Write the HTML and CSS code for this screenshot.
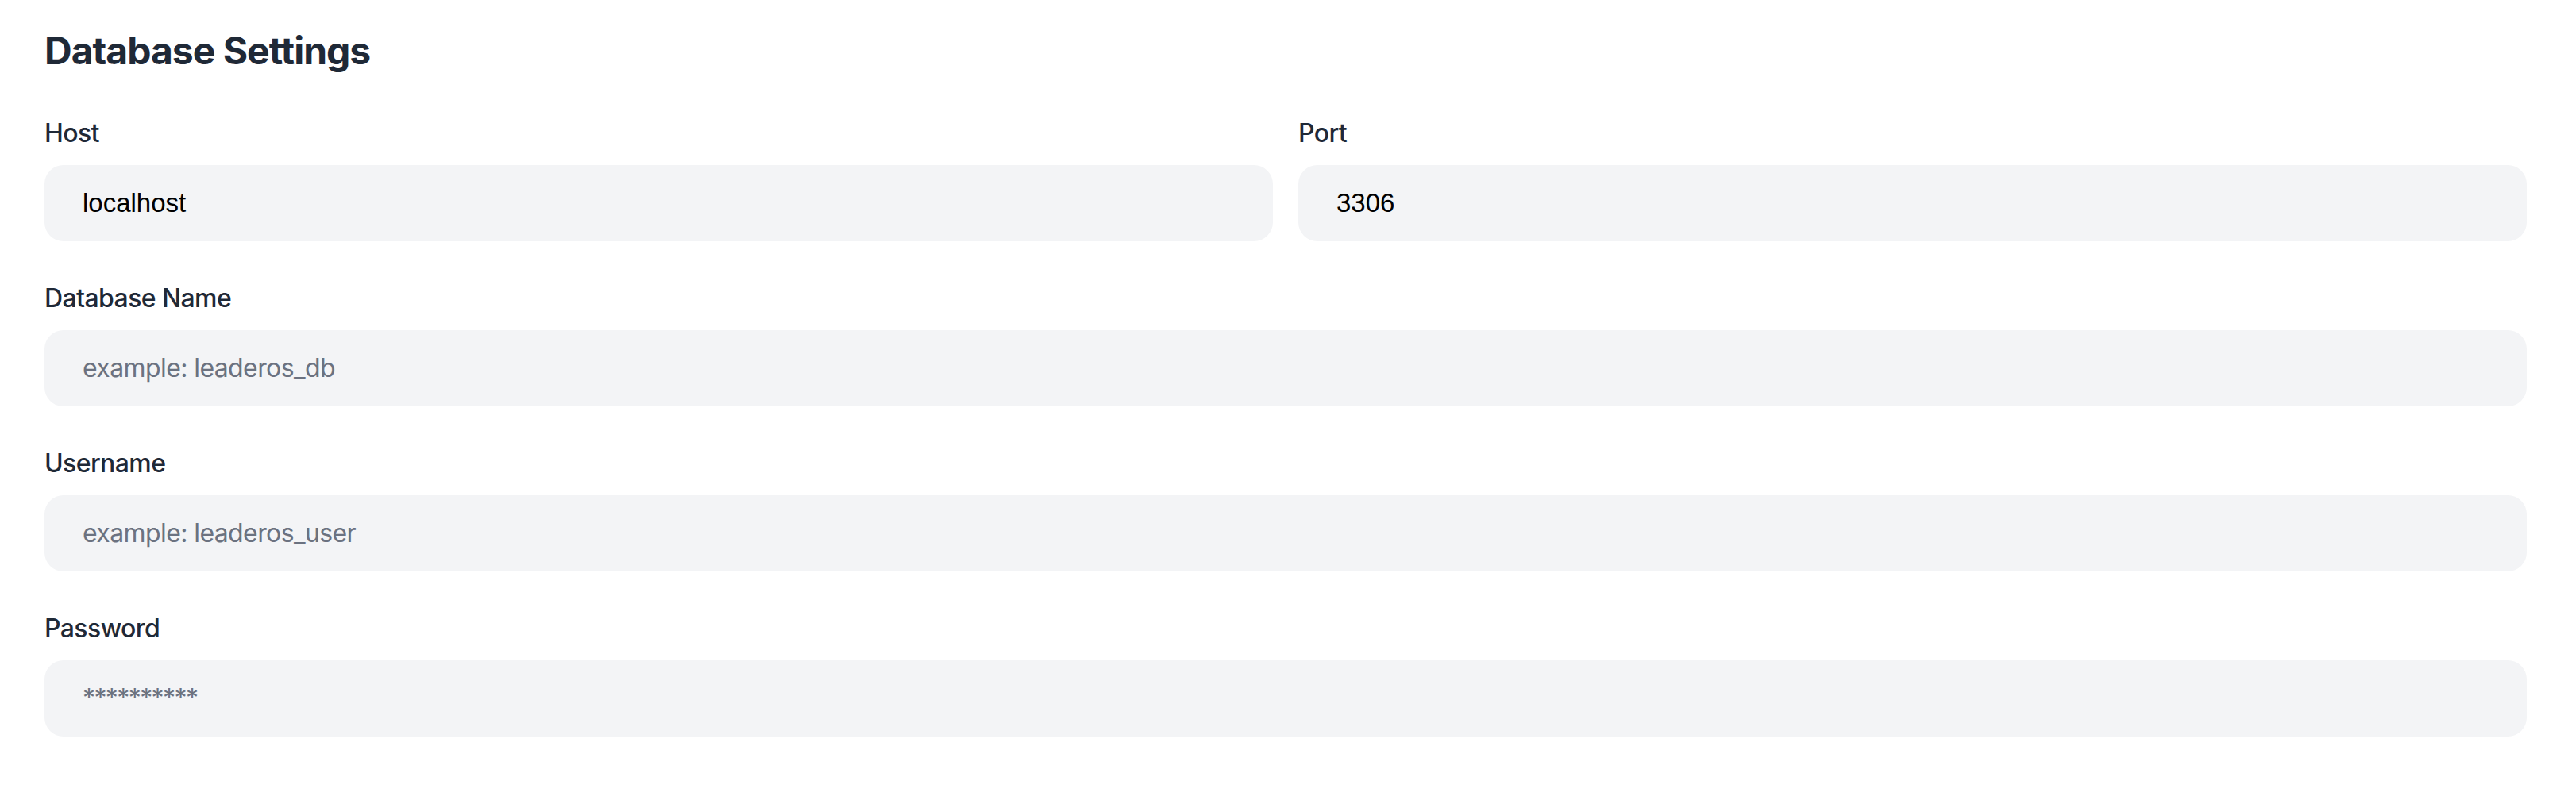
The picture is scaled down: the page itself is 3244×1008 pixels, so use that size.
FILE: index.html
```html
<!DOCTYPE html>
<html lang="en">
<head>
<meta charset="utf-8">
<title>Database Settings</title>
<link rel="stylesheet" href="styles.css">
</head>
<body>
<main class="page">
  <h1 class="title">Database Settings</h1>
  <div class="form">
    <div class="row-2">
      <div class="field">
        <label class="label" for="host">Host</label>
        <input class="input" id="host" type="text" value="localhost">
      </div>
      <div class="field">
        <label class="label" for="port">Port</label>
        <input class="input" id="port" type="text" value="3306">
      </div>
    </div>
    <div class="field">
      <label class="label" for="dbname">Database Name</label>
      <input class="input" id="dbname" type="text" placeholder="example: leaderos_db">
    </div>
    <div class="field">
      <label class="label" for="user">Username</label>
      <input class="input" id="user" type="text" placeholder="example: leaderos_user">
    </div>
    <div class="field">
      <label class="label" for="pass">Password</label>
      <input class="input input-pass" id="pass" type="password" placeholder="**********">
    </div>
  </div>
</main>
</body>
</html>
```
FILE: styles.css
```css
* { box-sizing: border-box; }
html, body { margin: 0; padding: 0; background: #ffffff; }
body { font-family: Inter, "Noto Sans", sans-serif; color: #1f2937; }
.page { padding: 32px 62px 0 56px; }
.title {
  margin: 0 0 48px 0;
  font-size: 48px;
  line-height: 64px;
  font-weight: 700;
  color: #1f2937;
  letter-spacing: -1px;
}
.form { display: flex; flex-direction: column; gap: 48px; }
.row-2 { display: grid; grid-template-columns: 1fr 1fr; gap: 32px; }
.field { display: flex; flex-direction: column; }
.label {
  display: block;
  font-size: 32px;
  line-height: 48px;
  font-weight: 500;
  color: #1f2937;
  margin-bottom: 16px;
  letter-spacing: -0.6px;
}
.input {
  display: block;
  width: 100%;
  height: 96px;
  border: none;
  outline: none;
  border-radius: 24px;
  background: #f3f4f6;
  padding: 0 48px;
  font-family: "Liberation Sans", Arial, sans-serif;
  font-size: 33px;
  color: #000000;
}
.input::placeholder {
  font-family: Inter, "Noto Sans", sans-serif;
  font-size: 32px;
  letter-spacing: -0.6px;
  color: #6b7280;
  opacity: 1;
}
.input-pass::placeholder {
  letter-spacing: -1.6px;
}
```
